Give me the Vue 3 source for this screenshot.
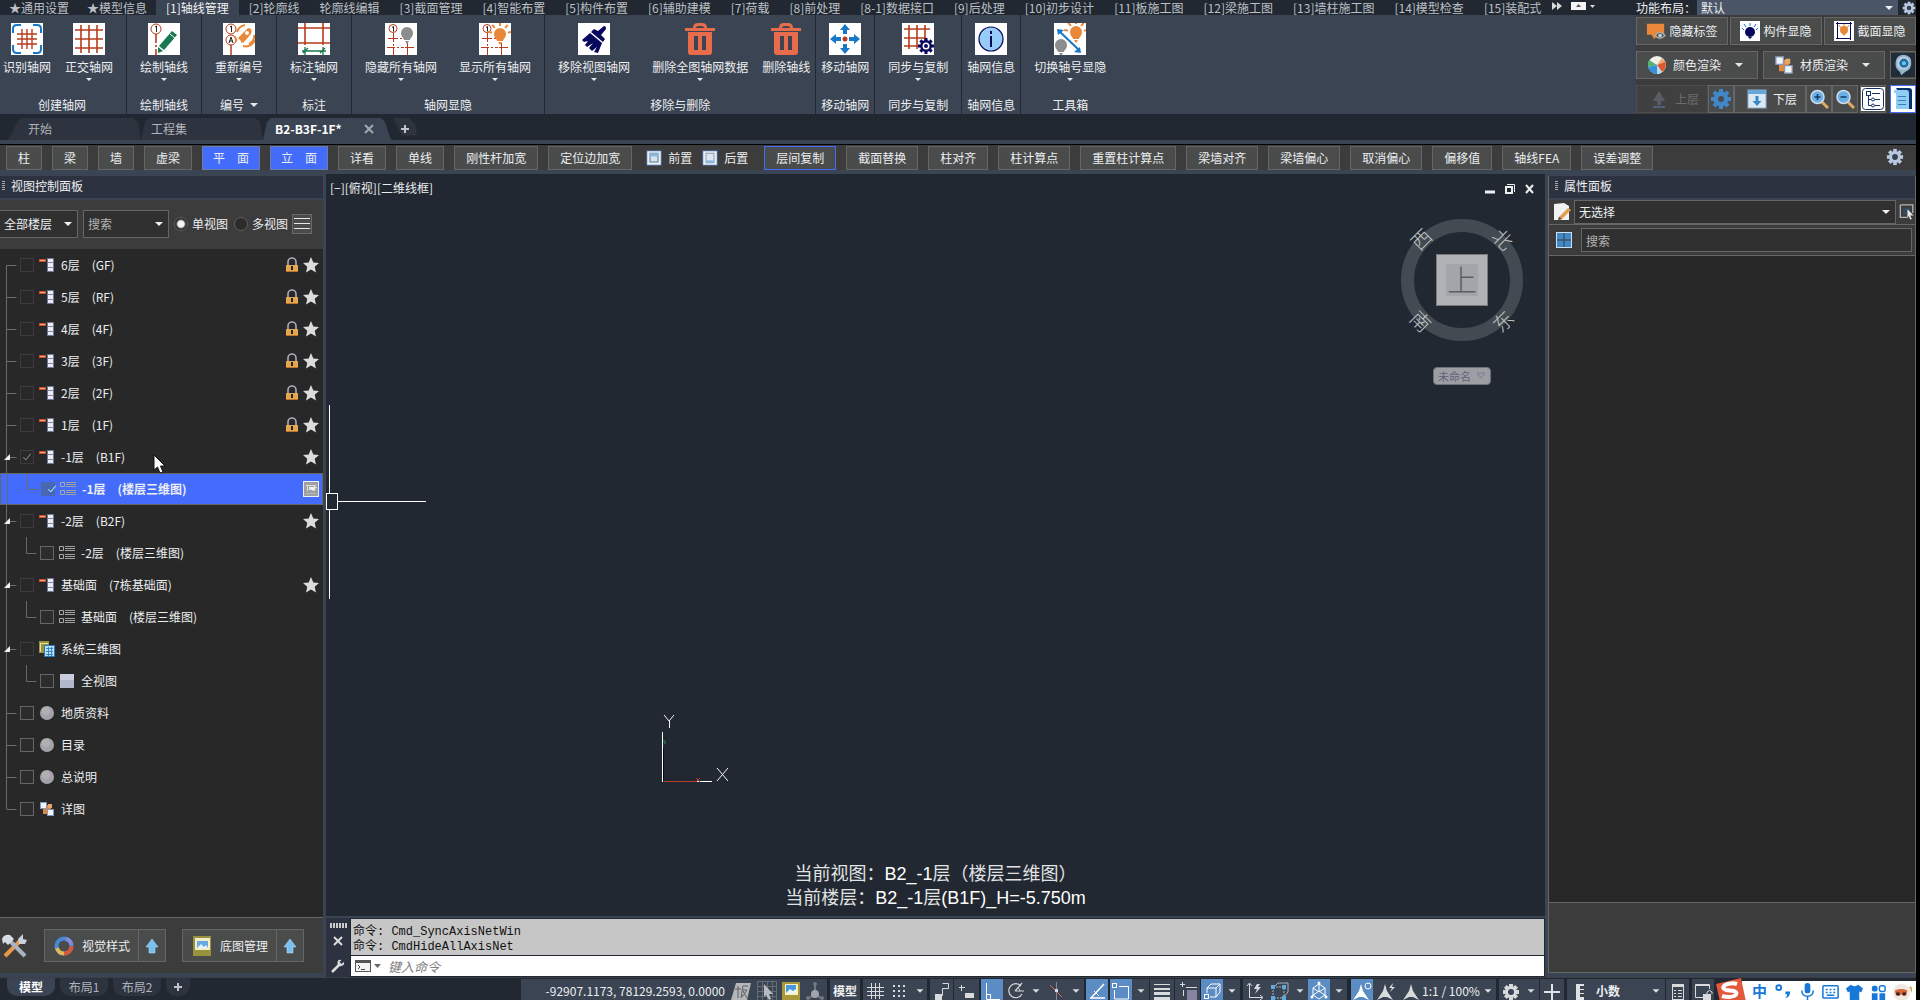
<script setup>
import { ref } from 'vue'

const menus = [
  '★通用设置', '★模型信息', '[1]轴线管理', '[2]轮廓线', '轮廓线编辑', '[3]截面管理', '[4]智能布置',
  '[5]构件布置', '[6]辅助建模', '[7]荷载', '[8]前处理', '[8-1]数据接口', '[9]后处理', '[10]初步设计',
  '[11]板施工图', '[12]梁施工图', '[13]墙柱施工图', '[14]模型检查', '[15]装配式'
]
const activeMenu = ref('[1]轴线管理')

const groups = [
  { label: '创建轴网', items: [{ t: '识别轴网', i: 'scan' }, { t: '正交轴网', i: 'grid', drop: true }] },
  { label: '绘制轴线', items: [{ t: '绘制轴线', i: 'draw', drop: true }] },
  { label: '编号', more: true, items: [{ t: '重新编号', i: 'renum', drop: true }] },
  { label: '标注', items: [{ t: '标注轴网', i: 'dim', drop: true }] },
  { label: '轴网显隐', items: [{ t: '隐藏所有轴网', i: 'hide', drop: true }, { t: '显示所有轴网', i: 'show', drop: true }] },
  { label: '移除与删除', items: [{ t: '移除视图轴网', i: 'brush', drop: true }, { t: '删除全图轴网数据', i: 'trash', drop: true }, { t: '删除轴线', i: 'trash' }] },
  { label: '移动轴网', items: [{ t: '移动轴网', i: 'move' }] },
  { label: '同步与复制', items: [{ t: '同步与复制', i: 'sync', drop: true }] },
  { label: '轴网信息', items: [{ t: '轴网信息', i: 'info' }] },
  { label: '工具箱', items: [{ t: '切换轴号显隐', i: 'toggle', drop: true }] }
]

const tools = [
  { t: '柱' }, { t: '梁' }, { t: '墙' }, { t: '虚梁' }, { t: '平\u3000面', on: true }, { t: '立\u3000面', on: true },
  { t: '详看' }, { t: '单线' }, { t: '刚性杆加宽' }, { t: '定位边加宽' },
  { t: '前置', i: 'front' }, { t: '后置', i: 'back' },
  { t: '层间复制', focus: true }, { t: '截面替换' }, { t: '柱对齐' }, { t: '柱计算点' }, { t: '重置柱计算点' },
  { t: '梁墙对齐' }, { t: '梁墙偏心' }, { t: '取消偏心' }, { t: '偏移值' }, { t: '轴线FEA' }, { t: '误差调整' }
]

const rows = ref([
  { t: '6层', s: '(GF)', i: 'floor', dim: true, lock: true, star: true, first: true },
  { t: '5层', s: '(RF)', i: 'floor', dim: true, lock: true, star: true },
  { t: '4层', s: '(4F)', i: 'floor', dim: true, lock: true, star: true },
  { t: '3层', s: '(3F)', i: 'floor', dim: true, lock: true, star: true },
  { t: '2层', s: '(2F)', i: 'floor', dim: true, lock: true, star: true },
  { t: '1层', s: '(1F)', i: 'floor', dim: true, lock: true, star: true },
  { t: '-1层', s: '(B1F)', i: 'floor', dim: true, star: true, open: true, on: true },
  { t: '-1层', s: '(楼层三维图)', i: 'list', child: true, on: true, sel: true },
  { t: '-2层', s: '(B2F)', i: 'floor', dim: true, star: true, open: true },
  { t: '-2层', s: '(楼层三维图)', i: 'list', child: true },
  { t: '基础面', s: '(7栋基础面)', i: 'floor', dim: true, star: true, open: true },
  { t: '基础面', s: '(楼层三维图)', i: 'list', child: true },
  { t: '系统三维图', i: 'sheets', dim: true, open: true },
  { t: '全视图', i: 'square', child: true },
  { t: '地质资料', i: 'ball' },
  { t: '目录', i: 'ball' },
  { t: '总说明', i: 'ball' },
  { t: '详图', i: 'blocks', last: true }
])
const trunk = r => (r.first ? 'M6.5 16v16' : r.last ? 'M6.5 0v16' : 'M6.5 0v32')

const viewMode = ref('single')

const cells = [
  { w: 26, i: 'ban' }, { w: 26, i: 'pick' }, { w: 22, i: 'pic' }, { w: 25, i: 'tri' }, { g: 3 },
  { w: 30, t: '模型', b: true }, { g: 3 },
  { w: 23, i: 'hash' }, { w: 26, i: 'dots' }, { w: 15, i: 'down' }, { g: 3 },
  { w: 23, i: 'step' }, { g: 1 }, { w: 25, i: 'plusbox' }, { g: 2 },
  { w: 22, i: 'ortho', on: true }, { w: 25, i: 'polar' }, { w: 16, i: 'down' }, { w: 24, i: 'iso' }, { w: 16, i: 'down' }, { g: 2 },
  { w: 22, i: 'track', on: true }, { g: 2 }, { w: 22, i: 'snap', on: true }, { w: 17, i: 'down' }, { g: 1 },
  { w: 24, i: 'lw' }, { g: 1 }, { w: 25, i: 'trans' }, { g: 1 }, { w: 22, i: 'cube', on: true }, { w: 17, i: 'down' }, { g: 3 },
  { w: 24, i: 'ucs' }, { w: 24, i: 'cube2' }, { w: 17, i: 'down' }, { w: 22, i: 'gizmo', on: true }, { w: 17, i: 'down' }, { g: 4 },
  { w: 22, i: 'anno1', on: true }, { w: 26, i: 'anno2' }, { w: 23, i: 'anno3' }, { w: 58, t: '1:1 / 100%' }, { w: 16, i: 'down' }, { g: 3 },
  { w: 24, i: 'cog' }, { w: 16, i: 'down' }, { g: 1 }, { w: 24, i: 'plus' }, { g: 3 },
  { w: 24, i: 'ruler' }, { w: 34, t: '小数', b: true }, { w: 22, i: 'none' }, { w: 18, i: 'down' }, { g: 1 },
  { w: 23, i: 'props' }, { g: 3 }, { w: 22, i: 'lockui' }
]

const R = '#b83c1e'
const cogTeeth = (cx, cy, r, w, n, c) =>
  Array.from({ length: n }, (_, k) => `<rect x="${cx - w / 2}" y="${cy - r}" width="${w}" height="${r}" fill="${c}" transform="rotate(${(k * 360) / n} ${cx} ${cy})"/>`).join('')
const cog = (cx, cy, r, w, c, hole, hr) =>
  cogTeeth(cx, cy, r, w, 8, c) + `<circle cx="${cx}" cy="${cy}" r="${r * 0.74}" fill="${c}"/><circle cx="${cx}" cy="${cy}" r="${hr}" fill="${hole}"/>`
const white = '<rect width="32" height="32" fill="#fff"/>'
const bulb = (x, y, c) => `<path d="M${x} ${y - 6}a6 6 0 0 1 6 6c0 4-3 5-3 7h-6c0-2-3-3-3-7a6 6 0 0 1 6-6z" fill="${c}"/><path d="M${x - 2} ${y + 8}h4l-2 3z" fill="${c}"/>`
const rays = (x, y, c) => [-80, -40, 0, 40, 80].map(a => `<path d="M${x} ${y - 8}v-4" stroke="${c}" stroke-width="2" transform="rotate(${a} ${x} ${y})"/>`).join('')
const axis = `<path d="M8.500 10v9M8.500 21v2M8.500 25v7M3 15.500h10M15 15.500h2M2 24.500h8M12 24.500h2M16 24.500h3M20 24.500h9M22.500 20v12" stroke="${R}" fill="none"/><circle cx="8" cy="5.500" r="4" fill="#fff" stroke="${R}"/><path d="M7 4.500l1.500-1v5" stroke="#222" fill="none"/>`
const arrowHead = 'M10 1l2 7 6 9-6-3h-4l-6 3 6-9z'

const icons = {
  scan: white + `<path d="M2 10V6q0-4 4-4h4M22 2h4q4 0 4 4v4M30 22v4q0 4-4 4h-4M10 30H6q-4 0-4-4v-4" fill="none" stroke="#1878c8" stroke-width="2"/><path d="M11 6v20M16 6v20M21 6v20M6 11h20M6 16h20M6 21h20" stroke="${R}" stroke-width="1.400"/>`,
  grid: white + `<path d="M8 2v28M16 2v28M24 2v28M2 7h28M2 16h28M2 25h28" stroke="${R}" stroke-width="1.600"/>`,
  draw: white + `<circle cx="8" cy="6" r="5" fill="#fff" stroke="${R}"/><path d="M7 4l1.500-1v6" stroke="#222" fill="none"/><path d="M8 11v9M8 22v2M8 26v6" stroke="${R}" stroke-width="1.600"/><path d="M24 8l5 4-13 15-5-4z" fill="#187850"/><path d="M10 24l5 4-5 2z" fill="#187850"/><path d="M22 11l5 4" stroke="#fff"/>`,
  renum: white + `<path d="M8 20v12" stroke="${R}" stroke-width="1.500"/><circle cx="8" cy="6" r="5" fill="#fff" stroke="${R}"/><circle cx="8" cy="17" r="5" fill="#fff" stroke="${R}"/><path d="M7 4l1.500-1v6M6 20l2-6 2 6M6.500 18h3" stroke="#222" fill="none"/><path d="M26 6l-1 8-7 6 1-8z" fill="#e88838"/><path d="M25 5q5 0 3 6l-8 9-5-5z" fill="#e88838"/><circle cx="24" cy="10" r="2" fill="#fff"/><path d="M14 9q2-6 8-7M31 12q1 6-5 9M20 23q8 2 12-6M12 13q0 3 2 5" stroke="#e88838" stroke-width="2" fill="none"/>`,
  dim: white + `<path d="M7 0v22M25 0v22M0 5h32M0 20h32" stroke="${R}" stroke-width="1.600"/><path d="M4 28h24M7 24v8M25 24v8M5 30l5-5M22 30l5-5" stroke="#187850" stroke-width="1.300"/>`,
  hide: white + axis + bulb(22, 10, '#8a8c8e'),
  show: white + axis + bulb(21, 11, '#e88838') + rays(21, 11, '#e88838'),
  brush: white + `<path d="M26 3q2 0 2 3l-5 6 4 4-2 3-12-10 3-3 4 2z" fill="#08085e"/><path d="M12 10l12 10-4 10-4-1 3-5-5 4-3-3 4-5-6 4-2-2 3-4-4 1-2-2z" fill="#08085e"/>`,
  trash: '<path d="M9 5q0-5 5-5h4q5 0 5 5h8v3H1V5zM12 5h8q0-2-3-2h-2q-3 0-3 2zM4 9h24v20q0 3-3 3H7q-3 0-3-3zM10 13v14h4V13zM18 13v14h4V13z" fill="#e86c4c" fill-rule="evenodd"/>',
  move: white + '<path d="M16 1l5 6h-3v4h-4V7h-3zM16 31l5-6h-3v-4h-4v4h-3zM1 16l6-5v3h5v4H7v3zM31 16l-6-5v3h-5v4h5v3z" fill="#1878c8"/><circle cx="16" cy="16" r="2.500" fill="#b83c1e"/>',
  sync: white + `<path d="M7 2v24M15 2v24M23 2v16M2 6h26M2 15h22M2 23h14" stroke="${R}" stroke-width="1.600"/>` + cog(24, 23, 8, 3, '#08085e', '#fff', 3.5) + '<circle cx="24" cy="23" r="2" fill="#08085e"/>',
  info: white + '<circle cx="16" cy="16" r="12" fill="#98ccf8" stroke="#08085e" stroke-width="1.200"/><path d="M16 8v3M16 13v11" stroke="#08085e" stroke-width="2"/>',
  toggle: white + bulb(22, 9, '#e88838') + rays(22, 9, '#e88838') + bulb(7, 22, '#8a8c8e') + '<path d="M5 8l20 19" stroke="#1878c8" stroke-width="2"/><path d="M3 6l7 1-6 5zM27 30l-7-1 6-5z" fill="#1878c8"/>',
  front: '<rect x="1" y="1" width="18" height="18" fill="#e8f0fa" stroke="#3c5c98"/><rect x="5" y="4" width="10" height="11" fill="#d4e4f0" stroke="#445868"/><rect x="5" y="4" width="10" height="4" fill="#88b8e0"/>',
  back: '<rect x="1" y="1" width="18" height="18" fill="#e8f0fa" stroke="#3c5c98"/><rect x="5" y="4" width="10" height="12" fill="#dce6f0" stroke="#788898"/><rect x="5" y="13" width="10" height="3" fill="#88b8e0"/>',
  floor: '<path d="M0 3.500h7" stroke="#c85030" stroke-width="3"/><path d="M1 3.500h5" stroke="#f0a870"/><rect x="8.500" y="1.500" width="6" height="13" fill="#ececf2" stroke="#687898"/><path d="M9 5.500h6M9 10.500h6" stroke="#8088a8"/>',
  list: '<path d="M.5 1.500h4v4h-4zM.5 9.500h4v4h-4z" fill="none" stroke="#a8a8a8"/><path d="M6 1.500h10M6 3.500h10M6 5.500h10M6 9.500h10M6 11.500h10M6 13.500h10" stroke="#a0a0a0"/>',
  sheets: '<path d="M0 0h10v12H0z" fill="#9a9440"/><path d="M1 2.500h8M1.500 3v8" stroke="#e8e0a0"/><rect x="5.500" y="4.500" width="10" height="11" fill="#b8e0f8" stroke="#2878b8"/><path d="M7 7.500h7M7 10.500h7M7 13.500h7M9.500 6v9M12.500 6v9" stroke="#3888c8"/>',
  square: '<rect x="1" y="1" width="14" height="14" fill="#b4b8cc"/><rect x="1" y="1" width="14" height="6" fill="#c8ccdc"/>',
  ball: '<circle cx="8" cy="8" r="7" fill="#a4a4a8"/><circle cx="7" cy="6" r="4" fill="#b0b0b4"/>',
  blocks: '<path d="M4 4h8v9H4z" fill="#e08840"/><rect x="1.500" y="1.500" width="6" height="6" fill="#f0f4fc" stroke="#8898b8"/><rect x="8.500" y="8.500" width="6" height="6" fill="#f0f4fc" stroke="#8898b8"/><path d="M9 3h4v4H9z" fill="#e8a868"/>',
  lock: '<path d="M4 8V5a4 4 0 0 1 8 0v3" fill="none" stroke="#a8acb4" stroke-width="1.600"/><rect x="2" y="8" width="12" height="7" fill="#e0a850"/><path d="M2 14.500h12" stroke="#b87828"/><path d="M8 9v4" stroke="#302010" stroke-width="2"/>',
  star: '<path d="M8 0l2.300 5.400 5.700.5-4.300 3.800 1.300 5.800L8 12.400 3 15.500l1.300-5.800L0 5.900l5.700-.5z" fill="#dcdcdc"/>',
  save: '<rect x="0.500" y="0.500" width="15" height="15" fill="#a0a0a0" stroke="#e8f0f8"/><path d="M4.500 4v6M11.500 4v6M3 4.500h10" stroke="#e0e0e0" fill="none"/><rect x="6" y="6" width="4" height="3" fill="#e0e0e0"/><path d="M3 12.500h10" stroke="#b8b8b8"/>',
  tag: '<path d="M1 2h19v12H13l-4 5-3-5H1z" fill="#e88838"/><path d="M10 15q5-7 11 0q-6 6-11 0z" fill="#4c4e50" stroke="#a8acb0" stroke-width="1.500"/><circle cx="15.500" cy="15" r="2" fill="#d0d0d0"/>',
  member: '<rect width="20" height="20" fill="#fff"/><circle cx="10" cy="11" r="5" fill="#08085e"/><path d="M8 16h4l-2 2z" fill="#08085e"/><path d="M10 5V2M6 6L4 3M14 6l2-3M4 9l-2-2M16 9l2-2" stroke="#1878c8"/>',
  section: '<rect width="20" height="20" fill="#fff"/><path d="M3.500 1v16M16.500 1v18M2 2.500h16M2 17.500h15" stroke="#08085e" fill="none"/><path d="M5 4l2 3M10 3v4M15 4l-2 3" stroke="#e88838"/><circle cx="10" cy="9" r="4" fill="#e88838"/><path d="M7 11h6l-3 4z" fill="#e88838"/>',
  sphere: '<circle cx="10" cy="10" r="9" fill="#f0f0e8"/><path d="M10 10L2 5a9 9 0 0 0-1 7z" fill="#58b070"/><path d="M10 10l-9 2a9 9 0 0 0 9 7z" fill="#3890d8"/><path d="M10 10l8-4a9 9 0 0 1-3 11z" fill="#e05830"/><path d="M10 10l5-7a9 9 0 0 1 3 4z" fill="#f0a878"/><path d="M10 10v9q3 0 5-2z" fill="#b8d8f0"/>',
  face: '<rect width="26" height="26" fill="#202c38"/><path d="M5 10Q6 2 14 2q9 1 8 10-1 7-6 8l-5 4q-1-4-3-5-4-4-3-9z" fill="#98b4c8"/><path d="M7 9q2-5 8-5 6 2 5 8-2 6-6 6-8 0-7-9z" fill="#c0d8e8"/><circle cx="14" cy="11" r="5" fill="#2870a0"/><circle cx="14" cy="11" r="2" fill="#68d0f8"/>',
  upfl: '<path d="M10 2l6 10h-4v4H8v-4H4z" fill="#5a5c68"/><path d="M4 18h12" stroke="#5a6a88" stroke-width="1.500"/>',
  downfl: '<rect x="1" y="1" width="18" height="18" fill="#d8e8f4" stroke="#90b0c8"/><rect x="1" y="1" width="18" height="4" fill="#68a8d8"/><path d="M8.500 7h3v5h3L10 17l-4.500-5h3z" fill="#3888c8"/>',
  zin: '<path d="M13 13l6 6" stroke="#e0a860" stroke-width="3"/><circle cx="8.500" cy="8" r="6.500" fill="#68b0e8" stroke="#d0dce8" stroke-width="1.500"/><path d="M5.500 8h6M8.500 5v6" stroke="#183860" stroke-width="1.500"/>',
  zout: '<path d="M13 13l6 6" stroke="#e0a860" stroke-width="3"/><circle cx="8.500" cy="8" r="6.500" fill="#68b0e8" stroke="#d0dce8" stroke-width="1.500"/><path d="M5.500 8h6" stroke="#183860" stroke-width="1.500"/>',
  bluecog: cog(10, 10, 10, 4, '#4088c8', '#4a4c4e', 3),
  treebox: '<rect width="24" height="24" fill="#fff"/><rect x="1.500" y="1.500" width="21" height="21" rx="3" fill="none" stroke="#183068"/><rect x="5.500" y="4.500" width="4" height="4" fill="none" stroke="#183068"/><path d="M11 6.500h8M7.500 9v9.500h3M7 12.500h3M14 12.500h5M14 18.500h5" stroke="#183068" fill="none"/><circle cx="12" cy="12.500" r="1.500" fill="none" stroke="#183068"/><circle cx="12" cy="18.500" r="1.500" fill="none" stroke="#183068"/>',
  scroll: '<rect width="24" height="24" fill="#fff"/><path d="M5 1h13q3 0 3 3v18h-4z" fill="#08306c"/><path d="M3 3h12q3 0 3 3v16H5V6H3z" fill="#90ccf4"/><path d="M7 9.500h8M7 13.500h8M7 17.500h8" stroke="#3080c0"/>',
  cogl: cog(10, 10, 9, 4, '#b8c8e0', '#38404c', 3.2),
  edit: '<path d="M3 2l10-1 5 3v14H3z" fill="#f0f2f4"/><path d="M17 6l3 2-9 9-4 1 1-3z" fill="#e0a050"/><path d="M7 18l1-3 3 2z" fill="#584030"/>',
  selpick: '<path d="M1 1h14v9M1 1v14h8" fill="none" stroke="#b0b4b8" stroke-width="1.500"/><rect x="4" y="4" width="8" height="8" fill="#38485c"/><path d="M9 6l7 7h-4l2 4-2 .5-1.500-4L9 16z" fill="#e8e8e8"/>',
  cat: '<rect x="0.500" y="0.500" width="15" height="15" fill="#4088c8" stroke="#d0e0f0"/><path d="M8 1v14M1 8h14" stroke="#383c40"/>',
  hammer: '<path d="M5 23L21 7" stroke="#e89848" stroke-width="4"/><path d="M8 6l17 17" stroke="#a8b4c4" stroke-width="4"/><path d="M2 6q2-5 8-4l4 4-6 6-3-3-2 2z" fill="#d8dce4"/><path d="M18 6l5-5v5l4 1-2 4h-6z" fill="#c8d0dc"/>',
  ring: '<circle cx="10" cy="10" r="7.500" fill="none" stroke="#4888d8" stroke-width="4"/><path d="M17.500 10a7.500 7.500 0 0 1-7.500 7.500" stroke="#d85838" stroke-width="4" fill="none"/><path d="M10 17.500A7.500 7.500 0 0 1 3 12" stroke="#e0b858" stroke-width="4" fill="none"/><path d="M12 3a7.500 7.500 0 0 1 5.500 6" stroke="#8888d8" stroke-width="4" fill="none"/>',
  arrowup: '<path d="M8 1l6 8h-3v6H5V9H2z" fill="#78c0f0" stroke="#c0e4fc" stroke-width=".5"/>',
  basemap: '<path d="M1 0h18v20H1z" fill="#98923c"/><rect x="3" y="2" width="15" height="12" fill="#f4ecc8"/><rect x="5" y="5" width="11" height="7" fill="#68a8e0"/><path d="M5 12l4-4 3 3 2-2 2 3z" fill="#e8f4fc"/>',
  down: '<path d="M5 9h10l-5 5z" fill="#d8dadc"/>',
  none: '',
  ban: '<path d="M5 3h15l-4 17H0z" fill="#b4b6b8"/><path d="M7 6v12M4 9h6M12 6h5M12 6l-2 12M12 10h4l-5 7M12 11l4 7" stroke="#5c6068" fill="none"/>',
  pick: '<path d="M.5 1.500h19v19M.5 1v19M5.500 1v19M10.500 1v19M15.500 1v19M0 6.500h20M0 11.500h20M0 16.500h20" fill="none" stroke="#646c76"/><path d="M7 4l9 10h-4l2 5-2 1-3-5-2 2z" fill="#b8bcc0"/>',
  pic: '<path d="M1 2h18v18H1z" fill="#a8983c"/><rect x="4" y="4" width="13" height="11" fill="#f8f0c0"/><rect x="5" y="5" width="10" height="8" fill="#4898e0"/><path d="M5 13l4-4 3 2 3-2v4z" fill="#e8f8f8"/>',
  tri: '<path d="M10 4v10M10 14l-7 5M10 14l7 5" stroke="#707880" stroke-width="2"/><circle cx="10" cy="14" r="4" fill="#a0a4a8"/><circle cx="10" cy="4" r="2" fill="#707880"/><circle cx="3" cy="18" r="2" fill="#707880"/><circle cx="17" cy="18" r="2" fill="#707880"/>',
  hash: '<path d="M6.500 3v16M10.500 3v16M14.500 3v16M2 7.500h17M2 11.500h17M2 15.500h17" stroke="#d8dadc"/>',
  dots: '<path d="M4 5h2v2H4zM9 5h2v2H9zM14 5h2v2h-2zM4 10h2v2H4zM9 10h2v2H9zM14 10h2v2h-2zM4 15h2v2H4zM9 15h2v2H9zM14 15h2v2h-2z" fill="#d8dadc"/>',
  step: '<path d="M10.500 3.500h6v5h-6v7H8" fill="none" stroke="#d8dadc"/><path d="M3 14h7v6H3z" fill="#d8dadc"/>',
  plusbox: '<path d="M2 7.500h6M4.500 5v6" stroke="#d8dadc"/><rect x="8" y="13" width="9" height="5" fill="#d8dadc"/>',
  ortho: '<path d="M4.500 3v16.500H18M4 14.500h4.500v5" stroke="#fff" fill="none"/>',
  polar: '<path d="M15 6a7 7 0 1 0 1 8M9 11h9M9 11l7-8" stroke="#d8dadc" stroke-width="1.200" fill="none"/><path d="M12 8q2 1 2 3" stroke="#d8dadc" fill="none"/>',
  iso: '<path d="M10.500 2v18" stroke="#808890"/><path d="M4 5l12 12" stroke="#d87050"/><rect x="9" y="9" width="3" height="3" fill="#d8dadc"/>',
  track: '<path d="M4 18L17 4M3 18h15" stroke="#fff" stroke-width="1.500" fill="none"/><path d="M7 11l5 5" stroke="#fff"/>',
  snap: '<path d="M3.500 10v9h14V6.500H8" stroke="#fff" fill="none"/><rect x="1.500" y="3.500" width="4" height="4" fill="none" stroke="#fff"/>',
  lw: '<path d="M2 4.500h16" stroke="#d8dadc"/><path d="M2 9h16" stroke="#d8dadc" stroke-width="2"/><path d="M2 13.500h16" stroke="#d8dadc" stroke-width="3"/><path d="M2 18.500h16" stroke="#d8dadc" stroke-width="3"/>',
  trans: '<path d="M2 4.500h5M4.500 2v5M5.500 10v6M8 7.500h11" stroke="#d8dadc"/><rect x="9" y="10" width="10" height="10" fill="#8484a0"/>',
  cube: '<path d="M5 8l4-4h9v8l-4 5H8M5 8h9v9M14 8l4-4M5 8v5" stroke="#fff" fill="none"/><rect x="2.500" y="14.500" width="4" height="4" fill="none" stroke="#fff"/>',
  ucs: '<path d="M4.500 18V4M2 6l2.500-3L7 6M4 17.500h13M15 15l3 2.500-3 2.500" stroke="#d8dadc" fill="none"/><path d="M12 4l-3 5h3l-2 5 6-7h-3l2-3z" fill="#d8dadc"/>',
  cube2: '<path d="M5 7l4-4h10v9l-4 5" stroke="#a8b0b8" fill="none"/><rect x="4" y="7" width="11" height="11" fill="none" stroke="#a8b0b8" stroke-dasharray="2 1"/><path d="M2 5h4v4H2zM13 5h4v4h-4zM2 16h4v4H2zM13 16h4v4h-4z" fill="#60a8e0"/>',
  gizmo: '<path d="M10 3v8M10 11l-7 5M10 11l7 5M4 8l6-4 6 4v7l-6 4-6-4zM4 8l6 4 6-4" stroke="#fff" fill="none"/><circle cx="10" cy="3" r="1.500" fill="#fff"/><circle cx="3" cy="17" r="1.500" fill="#fff"/><circle cx="17" cy="17" r="1.500" fill="#fff"/>',
  anno1: `<path d="${arrowHead}" fill="#fff" transform="translate(-1 3)"/><circle cx="16" cy="6" r="3" fill="none" stroke="#fff"/>`,
  anno2: `<path d="${arrowHead}" fill="#d8dadc" transform="translate(-1 3)"/><path d="M17 3l-4 5h3l-2 4 5-5h-3z" fill="#d8dadc"/>`,
  anno3: `<path d="${arrowHead}" fill="#d8dadc" transform="translate(0 3)"/>`,
  cog: cog(10, 12, 8, 4, '#d8dadc', '#3b4453', 3),
  plus: '<path d="M10 4v16M2 12h16" stroke="#e0e2e4" stroke-width="2"/>',
  ruler: '<path d="M7 4h8v2h-4v3h4v1h-4v3h4v1h-4v3h4v3H7z" fill="#e0e2e4"/>',
  props: '<rect x="4.500" y="4.500" width="11" height="15" fill="none" stroke="#d8dadc"/><path d="M4 6h12" stroke="#d8dadc" stroke-width="2"/><path d="M6 10.500h2M10 10.500h4M6 13.500h2M10 13.500h4M6 16.500h2M10 16.500h4" stroke="#d8dadc"/>',
  lockui: '<path d="M16.500 9V4.500h-14v13H10" fill="none" stroke="#d8dadc"/><path d="M3 5h13" stroke="#d8dadc" stroke-width="2"/><rect x="10" y="14" width="8" height="6" fill="#d8dadc"/><path d="M14 14v-2q3-3 5 0v2" stroke="#d8dadc" fill="none"/>',
  mic: '<rect x="7" y="2" width="6" height="11" rx="3" fill="#1878d8"/><path d="M4 10q0 6 6 6t6-6M10 16v4" stroke="#1878d8" stroke-width="1.600" fill="none"/>',
  punct: '<circle cx="5" cy="7" r="2.500" fill="none" stroke="#1878d8" stroke-width="2"/><path d="M12 11h5q0 6-5 7 2-2 2-4h-2z" fill="#1878d8"/>',
  keyb: '<rect x="2" y="5" width="16" height="13" rx="1" fill="none" stroke="#1878d8" stroke-width="1.600"/><path d="M5 9h2M9 9h2M13 9h2M5 12h2M9 12h2M13 12h2M6 15h8" stroke="#1878d8" stroke-width="1.600"/>',
  shirt: '<path d="M6 4q4 3 8 0l5 4-2 4-2-1v9H5v-9l-2 1-2-4z" fill="#1878d8"/>',
  apps: '<rect x="3" y="5" width="6" height="6" rx="2" fill="#1878d8"/><rect x="11" y="5" width="6" height="6" rx="2" fill="none" stroke="#1878d8" stroke-width="1.500"/><path d="M3 13h6v7H3zM11 13h6v7h-6z" fill="#1878d8"/>',
  fox: '<circle cx="9" cy="12" r="9" fill="#f0e8e4"/><path d="M2 10q7-3 13 0l-1 5q-3 2-5-1-3 3-6 1z" fill="#d86838"/><path d="M3 12h4v3H4zM10 12h4l-1 3h-3z" fill="#302020"/><path d="M18 5l1 3 1-3v8l-1-3-2 1 2-2-2-2z" fill="#d8a040"/>',
  sogou: '<path d="M2 6l25-6 5 24H6z" fill="#e4583c"/><path d="M23 6q-6-2-12 1-4 3 1 5l8 1q5 2 0 5-5 2-12 0" fill="none" stroke="#fff" stroke-width="4"/>'
}
</script>

<template>
  <div class="app">
    <header class="top">
      <div class="top-left">
        <nav class="menu">
          <button v-for="m in menus" :key="m" :class="{ on: m === activeMenu }" @click="activeMenu = m">{{ m }}</button>
          <svg class="menu-more" viewBox="0 0 46 14"><path d="M1 2l5 4-5 4zM6 2l5 4-5 4z" fill="#d8dadc" /><rect x="20" y="2" width="15" height="8" fill="#f4f4f4" /><path d="M25 7h5l-2.500-3z" fill="#555" /><path d="M39 5h5l-2.500 3z" fill="#d8dadc" /></svg>
        </nav>
        <div class="ribbon">
          <section v-for="g in groups" :key="g.label" class="group">
            <div class="group-items">
              <button v-for="it in g.items" :key="it.t" class="big" :class="{ drop: it.drop }">
                <svg viewBox="0 0 32 32" v-html="icons[it.i]"></svg>
                <span>{{ it.t }}</span>
                <i v-if="it.drop" class="caret small"></i>
              </button>
            </div>
            <div class="group-label">{{ g.label }}<i v-if="g.more" class="caret"></i></div>
          </section>
        </div>
      </div>
      <aside class="quick">
        <div class="layout-row">
          <label for="layout">功能布局：</label>
          <div class="sel layout"><select id="layout"><option>默认</option></select></div>
          <svg viewBox="0 0 20 20" class="s14" v-html="icons.cogl"></svg>
        </div>
        <div class="quick-box">
          <div class="qrow r1">
            <button class="q"><svg viewBox="0 0 22 20" v-html="icons.tag"></svg>隐藏标签</button>
            <button class="q"><svg viewBox="0 0 20 20" v-html="icons.member"></svg>构件显隐</button>
            <button class="q"><svg viewBox="0 0 20 20" v-html="icons.section"></svg>截面显隐</button>
          </div>
          <div class="qrow r2">
            <button class="q wide"><svg viewBox="0 0 20 20" v-html="icons.sphere"></svg>颜色渲染<i class="caret"></i></button>
            <button class="q wide"><svg viewBox="0 0 16 16" v-html="icons.blocks"></svg>材质渲染<i class="caret"></i></button>
            <button class="q ic" aria-label="助手"><svg class="full" viewBox="0 0 26 26" v-html="icons.face"></svg></button>
          </div>
          <div class="qrow r3">
            <button class="q lvl" disabled><svg viewBox="0 0 20 20" v-html="icons.upfl"></svg>上层</button>
            <button class="q ic" aria-label="设置"><svg viewBox="0 0 20 20" v-html="icons.bluecog"></svg></button>
            <button class="q lvl"><svg viewBox="0 0 20 20" v-html="icons.downfl"></svg>下层</button>
            <button class="q ic" aria-label="放大"><svg viewBox="0 0 20 20" v-html="icons.zin"></svg></button>
            <button class="q ic" aria-label="缩小"><svg viewBox="0 0 20 20" v-html="icons.zout"></svg></button>
            <button class="q ic apart" aria-label="结构树"><svg class="full" viewBox="0 0 24 24" v-html="icons.treebox"></svg></button>
            <button class="q ic hot" aria-label="属性"><svg class="full" viewBox="0 0 24 24" v-html="icons.scroll"></svg></button>
          </div>
        </div>
      </aside>
    </header>

    <nav class="docs">
      <button class="doc first">开始</button>
      <button class="doc">工程集</button>
      <button class="doc on">B2-B3F-1F*<svg viewBox="0 0 10 10"><path d="M1 1l8 8M9 1l-8 8" stroke="#a4a8ae" stroke-width="2" /></svg></button>
      <button class="doc add" aria-label="新建"><svg viewBox="0 0 10 10"><path d="M5 1v8M1 5h8" stroke="#c0c4c8" stroke-width="2" /></svg></button>
    </nav>

    <div class="tools">
      <template v-for="b in tools" :key="b.t">
        <button v-if="b.i" class="plain"><svg viewBox="0 0 20 20" v-html="icons[b.i]"></svg>{{ b.t }}</button>
        <button v-else class="tool" :class="{ on: b.on, focus: b.focus }">{{ b.t }}</button>
      </template>
      <svg viewBox="0 0 20 20" class="tool-cog" v-html="icons.cogl"></svg>
    </div>

    <main class="work">
      <aside class="panel left">
        <h2><i class="grip"></i>视图控制面板</h2>
        <div class="filter">
          <div class="sel all"><select aria-label="楼层"><option>全部楼层</option></select></div>
          <div class="sel find"><input placeholder="搜索" aria-label="搜索" /></div>
          <label><input v-model="viewMode" type="radio" name="view" value="single" />单视图</label>
          <label><input v-model="viewMode" type="radio" name="view" value="multi" />多视图</label>
          <button class="burger" aria-label="菜单"><i></i><i></i><i></i></button>
        </div>
        <div class="tree-box">
          <ul class="tree">
            <li v-for="(r, k) in rows" :key="k" :class="{ sel: r.sel }">
              <svg class="guide" :class="{ deep: r.child }" :viewBox="r.child ? '0 0 40 32' : '0 0 20 32'">
                <g stroke="#6a6a6a" fill="none">
                  <path :d="trunk(r)" />
                  <path :d="r.child ? 'M26.5 0v16.500h10' : 'M6.5 16.500h10'" />
                </g>
                <path v-if="r.open" d="M4 19h6v-6z" fill="#f0f0f0" />
              </svg>
              <label>
                <input v-model="r.on" type="checkbox" :class="{ dim: r.dim }" />
                <svg class="s16" viewBox="0 0 16 16" v-html="icons[r.i]"></svg>
                <span>{{ r.t }}</span><span v-if="r.s" class="sub">{{ r.s }}</span>
              </label>
              <svg v-if="r.lock" class="s16" viewBox="0 0 16 16" v-html="icons.lock"></svg>
              <svg v-if="r.star" class="s16" viewBox="0 0 16 16" v-html="icons.star"></svg>
              <svg v-if="r.sel" class="s16" viewBox="0 0 16 16" v-html="icons.save"></svg>
            </li>
          </ul>
          <svg class="pointer" viewBox="0 0 13 20"><path d="M1 1v15l3.500-3 2.500 6 3-1-2.500-6H12z" fill="#fff" stroke="#111" /></svg>
        </div>
        <div class="left-foot">
          <svg class="hammer" viewBox="0 0 28 26" v-html="icons.hammer"></svg>
          <div class="split"><button><svg viewBox="0 0 20 20" v-html="icons.ring"></svg>视觉样式</button><button class="up" aria-label="展开"><svg viewBox="0 0 16 16" v-html="icons.arrowup"></svg></button></div>
          <div class="split"><button><svg viewBox="0 0 20 20" v-html="icons.basemap"></svg>底图管理</button><button class="up" aria-label="展开"><svg viewBox="0 0 16 16" v-html="icons.arrowup"></svg></button></div>
        </div>
      </aside>

      <section class="center">
        <div class="canvas">
          <div class="view-label">[−][俯视][二维线框]</div>
          <svg class="winbtn" viewBox="0 0 50 12"><path d="M0 9h10" stroke="#eee" stroke-width="3" /><rect x="21" y="4" width="6" height="6" fill="none" stroke="#eee" stroke-width="2" /><path d="M22 1.500h7.500V9" fill="none" stroke="#eee" /><path d="M41 2l7 8M48 2l-7 8" stroke="#eee" stroke-width="2" /></svg>
          <svg class="cross" viewBox="0 0 100 194"><path d="M3.500 0v88M3.500 105v89M12 96.500h88" stroke="#fff" fill="none" /><rect x=".5" y="88.500" width="11" height="16" fill="none" stroke="#fff" /></svg>
          <svg class="ucs" viewBox="0 0 70 70"><path d="M.5 18v50M35 67.500h15" stroke="#fff" /><path d="M1.500 34v32" stroke="#080808" /><path d="M2 67.500h33M34 64l4 4M38 64l-4 4" stroke="#b83c28" /><path d="M1 27h2v3" stroke="#20885c" fill="none" /><path d="M2 1l5 6 5-6M7.500 7v7M55 54l11 13M66 54l-11 13" stroke="#f4f4f4" fill="none" /></svg>
          <div class="compass">
            <span class="w">西</span><span class="n">北</span><span class="s">南</span><span class="e">东</span>
            <div class="cube"><b>上</b></div>
          </div>
          <button class="ucs-name">未命名<svg viewBox="0 0 10 8"><path d="M1 1h8l-4 5z" fill="none" stroke="#787c98" /></svg></button>
          <div class="status-text">
            <p>当前视图：<b>B2_-1</b>层（楼层三维图）</p>
            <p>当前楼层：<b>B2_-1</b>层<b>(B1F)_H=-5.750m</b></p>
          </div>
        </div>
        <div class="cmd">
          <div class="cmd-side">
            <i class="cmd-grip"></i>
            <svg viewBox="0 0 10 10"><path d="M1 1l8 8M9 1l-8 8" stroke="#ddd" stroke-width="2" /></svg>
            <svg class="wrench" viewBox="0 0 14 14"><path d="M1 13l7-7" stroke="#ddd" stroke-width="2.500" /><path d="M12.500 3l-2 2-2-2 2-2q-4-1-4 3t4 3q4-1 2-4z" fill="#ddd" /></svg>
          </div>
          <div class="cmd-main">
            <pre>命令: Cmd_SyncAxisNetWin
命令: CmdHideAllAxisNet</pre>
            <div class="cmd-in">
              <svg viewBox="0 0 28 14"><rect x=".5" y="1.500" width="15" height="11" fill="#f4f4f4" stroke="#555" /><path d="M1 3h15" stroke="#555" stroke-width="2" /><path d="M3 6l2 2-2 2M6 10.500h4" stroke="#444" fill="none" /><path d="M19 5h7l-3.500 4z" fill="#666" /></svg>
              <input placeholder="键入命令" aria-label="键入命令" />
            </div>
          </div>
        </div>
      </section>

      <aside class="panel right">
        <h2><i class="grip"></i>属性面板</h2>
        <div class="prow">
          <svg class="s20" viewBox="0 0 20 20" v-html="icons.edit"></svg>
          <div class="sel pick"><select aria-label="选择"><option>无选择</option></select></div>
          <svg class="s16" viewBox="0 0 17 18" v-html="icons.selpick"></svg>
        </div>
        <div class="psearch">
          <svg class="s16" viewBox="0 0 16 16" v-html="icons.cat"></svg>
          <input placeholder="搜索" aria-label="搜索属性" />
        </div>
        <div class="pbody"></div>
        <div class="pfoot"></div>
      </aside>
    </main>

    <footer class="status">
      <nav class="sheets">
        <button class="on">模型</button><button>布局1</button><button>布局2</button><button class="add" aria-label="新建布局"><svg viewBox="0 0 10 10"><path d="M5 1v8M1 5h8" stroke="#c0c4c8" stroke-width="2" /></svg></button>
      </nav>
      <div class="cells">
        <span class="coords">-92907.1173, 78129.2593, 0.0000</span>
        <template v-for="(c, k) in cells" :key="k">
          <i v-if="c.g" :style="{ width: c.g + 'px' }"></i>
          <span v-else class="cell" :class="{ on: c.on, bold: c.b, arrow: c.i === 'down' }" :style="{ width: c.w + 'px' }">
            <svg v-if="c.i" viewBox="0 0 20 20" v-html="icons[c.i]"></svg><template v-else>{{ c.t }}</template>
          </span>
        </template>
        <div class="ime">
          <svg class="sogou" viewBox="0 0 32 24" v-html="icons.sogou"></svg>
          <div class="ime-bar">
            <b>中</b>
            <svg v-for="n in ['punct', 'mic', 'keyb', 'shirt', 'apps', 'fox']" :key="n" viewBox="0 0 20 20" v-html="icons[n]"></svg>
          </div>
        </div>
      </div>
    </footer>
  </div>
</template>

<style>
body { background: #222831; }
</style>

<style scoped>
.app { box-sizing: border-box; height: 100vh; display: flex; flex-direction: column; border-right: 4px solid #000; background: #222831; color: #eceef0; font: 12px/16px "Noto Sans CJK SC", "Liberation Sans", sans-serif; }
.app *, .app *::before, .app *::after { box-sizing: border-box; }
button, select, input { font: inherit; color: inherit; margin: 0; padding: 0; border: 0; background: none; border-radius: 0; outline: 0; }
button { white-space: nowrap; }
svg { display: block; flex: none; overflow: hidden; }
h2, p, pre, ul { margin: 0; padding: 0; font-weight: normal; }
.caret { display: inline-block; border: 4px solid transparent; border-top-color: #e4e6e8; border-bottom: 0; }
.caret.small { border-width: 3px 3px 0; }
.s14 { width: 14px; height: 14px; }
.s16 { width: 16px; height: 16px; }
.s20 { width: 20px; height: 20px; }

.top { display: flex; height: 114px; flex: none; }
.top-left { flex: 1; min-width: 0; display: flex; flex-direction: column; }
.menu { display: flex; height: 15px; flex: none; color: #bcc0c6; }
.menu button { height: 15px; line-height: 15px; padding: 0 10px; }
.menu button:nth-child(-n+2) { padding: 0 9px; }
.menu button.on { background: #3b4453; color: #f0f2f4; }
.menu-more { width: 46px; height: 14px; }
.ribbon { flex: 1; display: flex; background: #3b4453; }
.group { display: flex; flex-direction: column; padding: 8px 2px 1px; border-right: 1px solid #222831; }
.group:first-child { padding-left: 0; }
.group:last-child { border-right: 0; }
.group-items { display: flex; flex: 1; }
.big { display: flex; flex-direction: column; align-items: center; padding: 0 3px; }
.big.drop { padding: 0 11px; }
.big svg { width: 32px; height: 32px; }
.big span { margin-top: 4px; }
.big .caret { margin-top: 3px; }
.group-label { text-align: center; }
.group-label .caret { margin: 0 0 3px 6px; }

.quick { width: 280px; flex: none; display: flex; flex-direction: column; }
.layout-row { display: flex; height: 15px; align-items: center; flex: none; gap: 1px; }
.layout-row label { width: 60px; line-height: 15px; white-space: nowrap; }
.layout-row .s14 { margin-left: 3px; }
.quick-box { background: #3c3c3c; flex: 1; display: flex; flex-direction: column; gap: 6px; padding-top: 2px; }
.qrow { display: flex; height: 28px; }
.r1 { gap: 2px; }
.r2 { gap: 5px; }
.q { flex: 1; display: flex; align-items: center; justify-content: center; gap: 3px; background: #4a4c4c; border: 1px solid #666; }
.q svg { width: 20px; height: 20px; }
.q.wide { justify-content: flex-start; padding-left: 10px; gap: 6px; }
.q .caret { margin-left: 8px; }
.q.ic { flex: 0 0 26px; }
.q.ic svg.full { width: 24px; height: 24px; }
.q.lvl { gap: 6px; padding-left: 4px; }
.q.apart { margin-left: 2px; }
.q.hot { border: 1px solid #446cfc; background: #fff; margin-left: 4px; }
.q:disabled { color: #6c6c70; background: #404040; border-color: #4c4c4c; }

.sel { position: relative; display: flex; background: #303030; border: 1px solid #666; }
.sel select, .sel input { appearance: none; width: 100%; min-width: 0; padding-left: 4px; }
.sel select option { color: #000; }
.sel::after { content: ""; position: absolute; right: 5px; top: calc(50% - 2px); border: 4px solid transparent; border-top-color: #f0f0f0; border-bottom: 0; pointer-events: none; }
.sel.layout { flex: 1; height: 15px; background: #4a5568; border: 0; line-height: 15px; }
::placeholder { color: #b4b4b4; opacity: 1; }

.docs { display: flex; height: 30px; flex: none; padding-top: 4px; border-bottom: 4px solid #3b4453; }
.doc { display: flex; align-items: center; width: 122px; padding-left: 10px; background: #2d333f; color: #b0b4ba; clip-path: polygon(0 100%, 4px 4px, 8px 0, 114px 0, 119px 4px, 100% 100%); text-align: left; }
.doc.first { width: 141px; padding-left: 28px; clip-path: polygon(8px 100%, 18px 3px, 22px 0, 133px 0, 138px 4px, 100% 100%); }
.doc.on { width: 128px; padding-left: 12px; background: #3b4453; color: #fff; font-weight: bold; justify-content: space-between; padding-right: 17px; clip-path: polygon(0 100%, 4px 4px, 8px 0, 118px 0, 122px 4px, 100% 100%); }
.doc.add { width: 24px; margin-left: 2px; padding: 0; justify-content: center; clip-path: polygon(0 0, 16px 0, 22px 6px, 100% 80%, 9px 80%); }
.doc svg { width: 10px; height: 10px; }

.tools { display: flex; gap: 10px; height: 26px; flex: none; background: #3c3c3c; border-top: 1px solid #000; padding: 1px 6px 0; }
.tool { padding: 0 11px; height: 24px; background: #4a4c4c; border: 1px solid #666; }
.tool.on { background: #446cfc; border-color: #6e7ca8; padding: 0 10px; }
.tool.focus { border-color: #446cfc; }
.plain { display: flex; align-items: center; gap: 6px; padding-left: 4px; }
.plain + .plain { padding: 0 6px 0 0; }
.plain svg { width: 16px; height: 16px; }
.tool-cog { width: 18px; height: 18px; margin: 2px 6px 0 auto; }

.work { flex: 1; min-height: 0; display: grid; grid-template-columns: 323px minmax(0, 1fr) 368px; column-gap: 3px; background: #3b4453; }
.panel { display: flex; flex-direction: column; margin: 6px 0 4px; min-height: 0; background: #3c3c3c; }
.panel h2 { display: flex; align-items: center; gap: 6px; height: 24px; font-size: 12px; background: #2c323f; border-bottom: 2px solid #3b4453; padding: 0 0 3px 2px; flex: none; }
.panel.right h2 { padding-left: 6px; }
.grip { width: 3px; height: 10px; background: repeating-linear-gradient(#aaa 0 1px, transparent 1px 2px); }
.filter { display: flex; align-items: center; height: 49px; flex: none; padding-bottom: 2px; }
.filter .sel { height: 28px; }
.filter .all { width: 78px; border-left: 0; }
.filter .find { width: 86px; margin: 0 5px; }
.filter label { display: flex; align-items: center; gap: 4px; width: 60px; }
input[type="radio"] { appearance: none; width: 14px; height: 14px; border: 1px solid #5c5c5c; border-radius: 50%; background: #2c2c2c; }
input[type="radio"]:checked { background: radial-gradient(#f4f4f4 0 3px, #2c2c2c 5px); }
.burger { width: 20px; height: 20px; display: flex; flex-direction: column; justify-content: space-evenly; align-items: center; border: 1px solid #6a6a6a; background: #4a4c4c; margin-left: -2px; }
.burger i { width: 16px; height: 1px; background: #e8e8e8; }
.tree-box { flex: 1; min-height: 0; background: #282828; position: relative; overflow: hidden; }
.tree { list-style: none; }
.tree li { display: flex; align-items: center; height: 32px; padding-right: 4px; gap: 3px; }
.tree li.sel { background: #446cfc; font-weight: bold; padding-right: 3px; }
.tree label { display: flex; align-items: center; flex: 1; margin-left: -3px; }
.tree label .s16 { margin: 0 6px 0 5px; }
.guide { width: 20px; height: 32px; }
.guide.deep { width: 40px; }
.sub { margin-left: 12px; }
input[type="checkbox"] { appearance: none; width: 14px; height: 14px; border: 1px solid #666; background: #2c2c2c; }
input[type="checkbox"].dim { border-color: #3c3c3c; background: #282828; }
input[type="checkbox"]:checked::before { content: ""; display: block; width: 4px; height: 8px; margin: 1px 0 0 4px; border: solid #808080; border-width: 0 1px 1px 0; transform: rotate(40deg); }
.tree li.sel input { background: #4868b0; border-color: #4868b0; }
.tree li.sel input::before { border-color: #a8dcfc; }
.pointer { position: absolute; left: 153px; top: 205px; width: 13px; height: 20px; }
.left-foot { display: flex; align-items: center; height: 56px; flex: none; border-top: 1px solid #666; gap: 16px; }
.hammer { width: 28px; height: 26px; }
.split { display: flex; height: 33px; border: 1px solid #666; background: #4a4c4c; }
.split button { display: flex; align-items: center; gap: 8px; padding: 0 8px 0 9px; }
.split button svg { width: 20px; height: 20px; }
.split .up { border-left: 1px solid #666; width: 27px; padding: 0 5px; }
.split .up svg { width: 16px; height: 16px; }

.center { display: flex; flex-direction: column; padding-top: 4px; gap: 2px; min-width: 0; }
.canvas { flex: 1; position: relative; background: #222831; overflow: hidden; }
.view-label { padding: 6px 0 0 4px; }
.winbtn { position: absolute; right: 10px; top: 9px; width: 50px; height: 12px; }
.cross { position: absolute; left: 0; top: 231px; width: 100px; height: 194px; }
.ucs { position: absolute; left: 336px; top: 540px; width: 70px; height: 70px; }
.compass { position: absolute; right: 22px; top: 45px; width: 122px; height: 122px; border: 13px solid #434b52; border-radius: 50%; display: flex; align-items: center; justify-content: center; }
.compass span { position: absolute; font-size: 20px; line-height: 20px; font-weight: 300; color: #c0c4c6; }
.compass .w { left: -3px; top: -3px; transform: rotate(-45deg); }
.compass .n { right: -3px; top: -3px; transform: rotate(45deg); }
.compass .s { left: -3px; bottom: -3px; transform: rotate(45deg); }
.compass .e { right: -3px; bottom: -3px; transform: rotate(-45deg); }
.cube { width: 52px; height: 52px; background: #b0b2b6; border: 1px solid #787a7e; padding: 9px; }
.cube b { display: block; height: 32px; font-size: 30px; line-height: 29px; font-weight: 300; color: #5c5e66; background: #a2a6aa; text-align: center; }
.ucs-name { position: absolute; right: 54px; top: 193px; width: 58px; height: 18px; display: flex; align-items: center; justify-content: center; gap: 5px; border-radius: 4px; border: 1px solid #6c7080; background: #9c9ea4; color: #60647c; font-size: 11px; }
.ucs-name svg { width: 10px; height: 8px; }
.status-text { position: absolute; left: 0; right: 0; bottom: 8px; text-align: center; font-size: 18px; line-height: 24px; font-weight: 300; color: #e0e2e4; }
.status-text p { height: 24px; }
.status-text b { font-family: "Liberation Sans", sans-serif; font-weight: 400; line-height: 1; color: #fff; }
.cmd { display: flex; height: 59px; flex: none; background: #222831; }
.cmd-side { width: 24px; display: flex; flex-direction: column; align-items: center; padding-top: 5px; background: #2c323f; }
.cmd-side svg { width: 10px; height: 10px; margin-top: 8px; }
.cmd-side svg.wrench { width: 14px; height: 14px; margin-top: 13px; }
.cmd-grip { width: 17px; height: 5px; background: repeating-linear-gradient(90deg, #ccc 0 2px, transparent 2px 3px); }
.cmd-main { flex: 1; min-width: 0; display: flex; flex-direction: column; gap: 1px; padding: 1px; }
pre { flex: 1; padding: 6px 2px 0; background: #c6c6c6; color: #111; font: 12px/15px "Liberation Mono", "Noto Sans CJK SC", monospace; }
.cmd-in { display: flex; align-items: center; height: 20px; background: #fff; gap: 5px; padding-left: 4px; }
.cmd-in svg { width: 28px; height: 14px; }
.cmd-in input { flex: 1; color: #333; font-style: italic; font-size: 13px; height: 20px; }
.cmd-in ::placeholder { color: #808080; }

.right { border: solid #666; border-width: 0 1px; }
.prow { display: flex; align-items: center; height: 24px; flex: none; gap: 3px; padding-left: 2px; }
.prow .pick { flex: 1; height: 24px; }
.psearch { display: flex; align-items: center; height: 32px; flex: none; gap: 9px; padding: 3px 3px 3px 7px; border: solid #666; border-width: 1px 0; }
.psearch input { flex: 1; height: 24px; background: #303030; border: 1px solid #666; padding-left: 4px; }
.pbody { flex: 1; background: #282828; }
.pfoot { height: 71px; border: solid #666; border-width: 1px 0; flex: none; }

.status { display: flex; justify-content: space-between; height: 23px; flex: none; border-top: 1px solid #3a3f47; overflow: hidden; }
.sheets { display: flex; height: 18px; padding-left: 7px; gap: 5px; }
.sheets button { width: 48px; background: #2d333f; color: #b0b4ba; border-radius: 0 0 10px 10px; }
.sheets .on { background: #3b4453; color: #fff; font-weight: bold; }
.sheets .add { width: 24px; display: flex; align-items: center; justify-content: center; }
.sheets .add svg { width: 10px; height: 10px; }
.cells { display: flex; padding-top: 1px; }
.coords { width: 207px; background: #3b4453; text-align: right; padding: 4px 3px 0 0; }
.cell { display: flex; justify-content: center; background: #3b4453; padding-top: 1px; line-height: 21px; white-space: nowrap; flex: none; }
.cell.on { background: #5c8cc4; }
.cell.bold { font-weight: bold; }
.cell svg { width: 20px; height: 20px; }
.cell.arrow { align-items: center; }
.cell.arrow svg { width: 14px; height: 14px; }
.ime { display: flex; width: 202px; z-index: 1; }
.sogou { width: 32px; height: 24px; margin: -1px -4px 0 0; z-index: 1; }
.ime-bar { flex: 1; display: flex; align-items: center; justify-content: space-between; background: #fff; margin-top: 2px; padding: 0 4px 0 8px; }
.ime-bar svg { width: 19px; height: 19px; }
.ime-bar b { color: #1878d8; font-size: 15px; line-height: 19px; width: 19px; text-align: center; }
</style>
